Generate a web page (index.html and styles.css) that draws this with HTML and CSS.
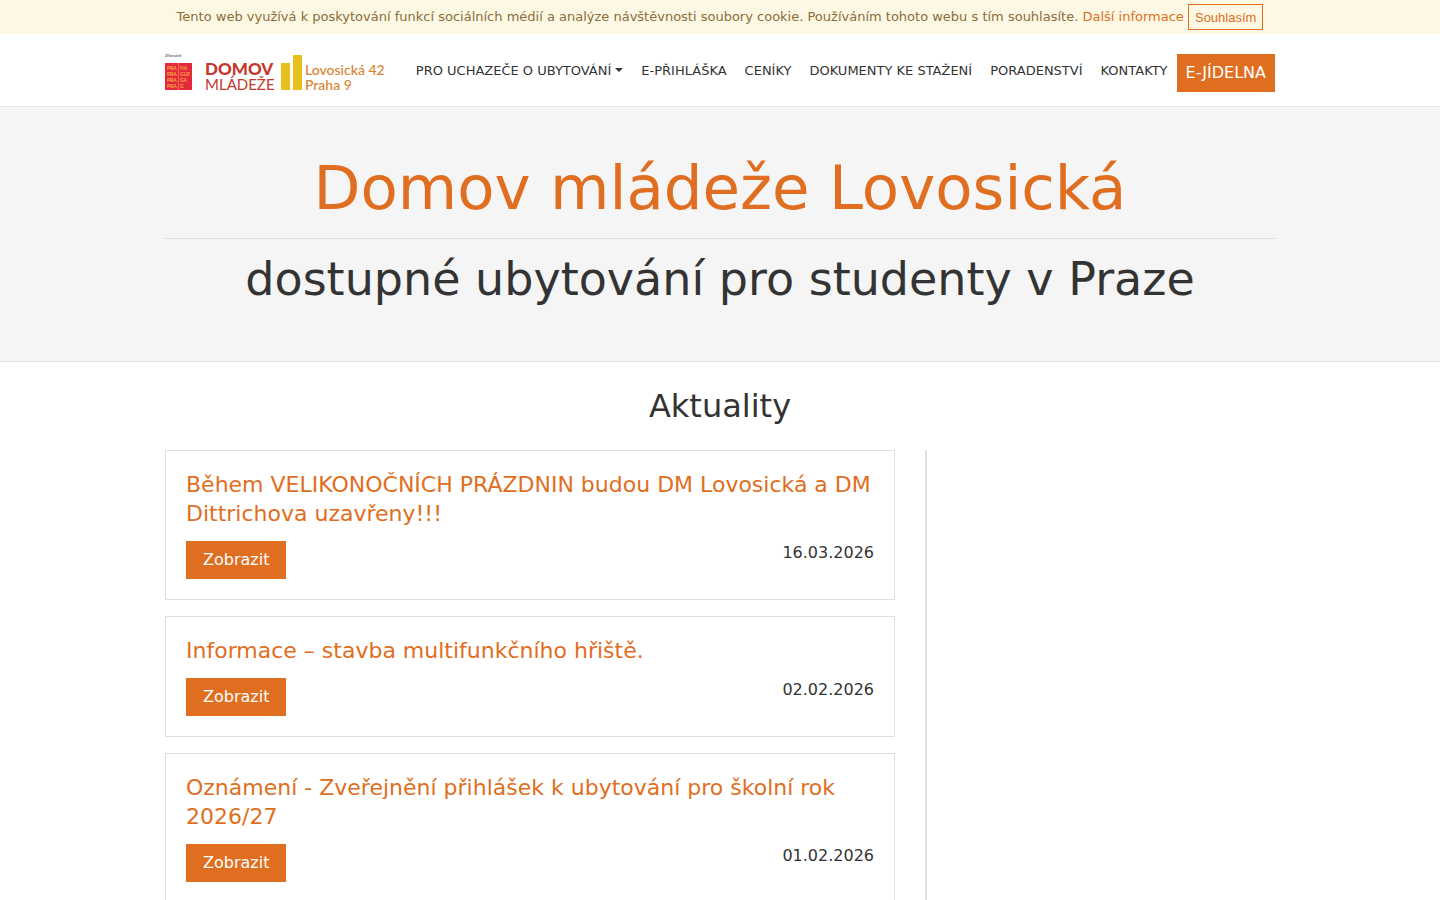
FILE: index.html
```html
<!DOCTYPE html>
<html lang="cs">

<head>
    <meta charset="UTF-8">
    <meta name="viewport" content="width=device-width, initial-scale=1.0">
    <title>Domov mládeže Lovosická</title>
    <link rel="stylesheet" href="styles.css">
</head>

<body>
    <div class="cookies">
        Tento web využívá k poskytování funkcí sociálních médií a analýze návštěvnosti soubory cookie. Používáním tohoto webu s tím souhlasíte.
        <a href="#">Další informace</a>
        <button type="button" class="cookies-ok">Souhlasím</button>
    </div>

    <header class="header">
        <div class="container navbar">
            <a href="#" class="logo">
                <svg width="222" height="38" viewBox="0 0 222 38" role="img" aria-label="Domov mládeže, Lovosická 42, Praha 9">
                    <text x="0" y="4" class="logo-small">Zřizovatel</text>
                    <rect x="0" y="10" width="27" height="27" fill="#e4293c" />
                    <path d="M13.5 10v27" stroke="#f0a050" stroke-width="0.6" />
                    <g class="logo-praha">
                        <text x="2" y="17">PRA</text>
                        <text x="15" y="17">HA</text>
                        <text x="2" y="23">PRA</text>
                        <text x="15" y="23">GUE</text>
                        <text x="2" y="29">PRA</text>
                        <text x="15" y="29">GA</text>
                        <text x="2" y="35">PRA</text>
                        <text x="15" y="35">G</text>
                    </g>
                    <text x="40" y="22" class="logo-domov">DOMOV</text>
                    <text x="40" y="37" class="logo-mladeze">MLÁDEŽE</text>
                    <rect x="116" y="10" width="9" height="27" fill="#e8c01c" />
                    <rect x="128" y="2" width="9" height="35" fill="#e8c01c" />
                    <text x="140" y="22" class="logo-adresa">Lovosická 42</text>
                    <text x="140" y="37" class="logo-adresa">Praha 9</text>
                </svg>
            </a>
            <nav>
                <ul class="menu">
                    <li><a href="#" class="dropdown">PRO UCHAZEČE O UBYTOVÁNÍ</a></li>
                    <li><a href="#">E-PŘIHLÁŠKA</a></li>
                    <li><a href="#">CENÍKY</a></li>
                    <li><a href="#">DOKUMENTY KE STAŽENÍ</a></li>
                    <li><a href="#">PORADENSTVÍ</a></li>
                    <li><a href="#">KONTAKTY</a></li>
                    <li><a href="#" class="jidelna">E-JÍDELNA</a></li>
                </ul>
            </nav>
        </div>
    </header>

    <section class="intro">
        <div class="container">
            <h1>Domov mládeže Lovosická</h1>
            <hr>
            <h2>dostupné ubytování pro studenty v Praze</h2>
        </div>
    </section>

    <main class="container">
        <h2 class="nadpis">Aktuality</h2>
        <div class="row">
            <div class="news">
                <article class="card">
                    <h3><a href="#">Během VELIKONOČNÍCH PRÁZDNIN budou DM Lovosická a DM Dittrichova uzavřeny!!!</a></h3>
                    <div class="card-footer">
                        <a href="#" class="btn">Zobrazit</a>
                        <time datetime="2026-03-16">16.03.2026</time>
                    </div>
                </article>
                <article class="card">
                    <h3><a href="#">Informace – stavba multifunkčního hřiště.</a></h3>
                    <div class="card-footer">
                        <a href="#" class="btn">Zobrazit</a>
                        <time datetime="2026-02-02">02.02.2026</time>
                    </div>
                </article>
                <article class="card">
                    <h3><a href="#">Oznámení - Zveřejnění přihlášek k ubytování pro školní rok 2026/27</a></h3>
                    <div class="card-footer">
                        <a href="#" class="btn">Zobrazit</a>
                        <time datetime="2026-02-01">01.02.2026</time>
                    </div>
                </article>
            </div>
            <aside class="side"></aside>
        </div>
    </main>
</body>

</html>
```
FILE: styles.css
```css
* {
    box-sizing: border-box;
}
body {
    margin: 0;
    font-family: "DejaVu Sans", sans-serif;
    font-size: 16px;
    line-height: 24px;
    color: #333;
    background-color: #fff;
}
a {
    color: #e06e21;
    text-decoration: none;
}
h1, h2, h3 {
    margin: 0;
    font-weight: normal;
}
.container {
    max-width: 1110px;
    margin: 0 auto;
}

/* cookies */
.cookies {
    padding: 4px 0;
    text-align: center;
    font-size: 13px;
    line-height: 26px;
    color: #8a6d3b;
    background-color: #fcf8e3;
}
.cookies-ok {
    height: 26px;
    padding: 0 6px;
    border: 1px solid #e06e21;
    vertical-align: top;
    font-family: "Liberation Sans", Arial, sans-serif;
    font-size: 13px;
    color: #e06e21;
    background-color: transparent;
    cursor: pointer;
}

/* menu */
.header {
    border-bottom: 1px solid #e7e7e7;
}
.navbar {
    display: flex;
    justify-content: space-between;
    padding: 19px 0 14px;
}
.logo svg {
    display: block;
    overflow: visible;
}
.logo text {
    font-family: Lato, sans-serif;
}
.logo .logo-small {
    font-size: 4px;
    font-style: italic;
    fill: #333;
}
.logo-praha text {
    font-size: 5px;
    font-weight: bold;
    fill: #f7a941;
}
.logo .logo-domov {
    font-size: 17px;
    font-weight: 900;
    fill: #c4372c;
}
.logo .logo-mladeze {
    font-size: 15px;
    fill: #c4372c;
}
.logo .logo-adresa {
    font-size: 14px;
    font-weight: 500;
    fill: #d9832e;
}
.menu {
    display: flex;
    margin: 0;
    padding: 0;
    list-style-type: none;
}
.menu a {
    display: block;
    padding: 6px 9px;
    font-size: 13px;
    color: #333;
}
.menu .dropdown::after {
    content: "";
    display: inline-block;
    margin-left: 4px;
    vertical-align: 3px;
    border-top: 4px solid;
    border-left: 4px solid transparent;
    border-right: 4px solid transparent;
}
.menu .jidelna {
    margin-top: 1px;
    padding: 7px 9px;
    font-size: 16px;
    color: #fff;
    background-color: #e06e21;
}

/* intro */
.intro {
    padding: 44px 0 54px;
    text-align: center;
    background-color: #f5f5f5;
    border-bottom: 1px solid #e7e7e7;
}
.intro h1 {
    font-size: 61px;
    line-height: 74px;
    color: #e06e21;
}
.intro hr {
    margin: 13px 0 12px;
    border: 0;
    border-top: 1px solid #dcdcdc;
}
.intro h2 {
    font-size: 46px;
    line-height: 56px;
}

/* aktuality */
.nadpis {
    padding: 24px 0;
    text-align: center;
    font-size: 32px;
    line-height: 40px;
}
.row {
    display: flex;
    gap: 30px;
}
.news {
    flex: 1;
}
.side {
    width: 350px;
    border-left: 2px solid #dee0e0;
}
.card {
    margin-bottom: 16px;
    padding: 19px 20px 20px;
    border: 1px solid #dfdfdf;
}
.card h3 {
    margin-bottom: 13px;
    font-size: 22px;
    line-height: 29px;
}
.card-footer {
    display: flex;
    justify-content: space-between;
    align-items: flex-start;
}
.btn {
    padding: 7px 17px;
    color: #fff;
    background-color: #e06e21;
}
```
